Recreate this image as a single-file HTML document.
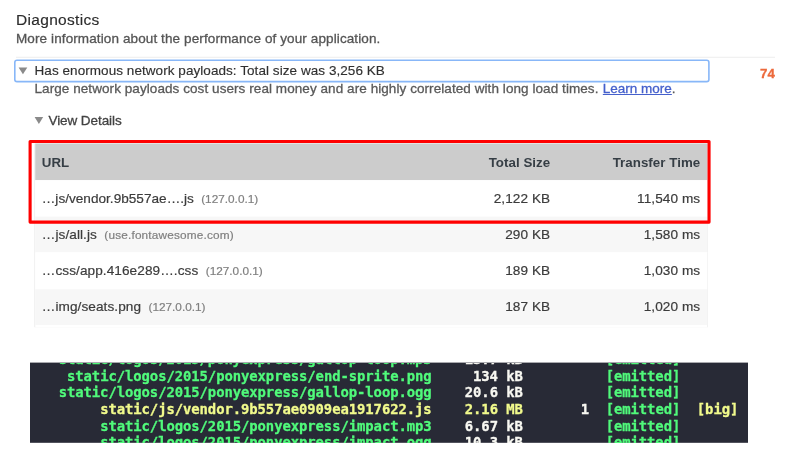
<!DOCTYPE html>
<html lang="en">
<head>
<meta charset="utf-8">
<title>Diagnostics</title>
<style>
  html, body { margin: 0; padding: 0; background: #fff; }
  body { width: 800px; height: 473px; position: relative; overflow: hidden;
         font-family: "Liberation Sans", sans-serif; color: #212121; }
  #wrap { position: absolute; left: 0; top: 0; width: 800px; height: 473px; overflow: hidden; filter: blur(0.3px); }
  #shapes { position: absolute; left: 0; top: 0; width: 800px; height: 473px; }
  .abs { position: absolute; white-space: nowrap; line-height: 1; -webkit-text-stroke: 0.3px currentColor; }
  #title { left: 16px; top: 11.5px; font-size: 15.5px; letter-spacing: 0.32px; color: #2c2c2c; -webkit-text-stroke-width: 0.15px; }
  #sub { left: 16px; top: 32px; font-size: 13.5px; letter-spacing: 0.11px; color: #555; }
  #audit { left: 34.5px; top: 64px; font-size: 13.5px; letter-spacing: 0.06px; color: #303030; -webkit-text-stroke-width: 0.15px; }
  #score { left: 760px; top: 66.5px; font-size: 13.3px; font-weight: bold; color: #ec6a3c; }
  #desc { left: 34.5px; top: 82px; font-size: 13.5px; letter-spacing: 0.07px; color: #595959; }
  #desc a { color: #4560cc; text-decoration: underline; margin-left: 0.5px; letter-spacing: 0; }
  #view { left: 48.5px; top: 114px; font-size: 13.5px; letter-spacing: -0.08px; color: #424242; }
  #table { position: absolute; left: 35.25px; top: 143.75px; width: 672px; height: 181px; }
  .row { position: absolute; left: 0; width: 100%; height: 36px; }
  .row span { -webkit-text-stroke: 0.2px currentColor; position: absolute; top: 1px; line-height: 36px;
              font-size: 13.6px; letter-spacing: 0.08px; color: #3c3c3c; white-space: nowrap; }
  .row .c1 { left: 6.5px; }
  .row .c1 small { font-size: 11.8px; letter-spacing: 0; color: #808080; margin-left: 3.5px; }
  .row .c1 small.fa { letter-spacing: 0.18px; }
  .row .c2 { right: 157px; text-align: right; }
  .row .c3 { right: 7px; text-align: right; }
  .head span { font-weight: bold; color: #363e45; font-size: 13.3px; top: 1.7px; -webkit-text-stroke-width: 0; letter-spacing: 0.05px; }
  #term { position: absolute; left: 30px; top: 363px; width: 718px; height: 80px; overflow: hidden; }
  #term pre { position: absolute; margin: 0; left: 28.7px; top: -12.1px; letter-spacing: -0.076px; -webkit-text-stroke: 0.3px currentColor;
              font-family: "DejaVu Sans Mono", "Liberation Mono", monospace; font-weight: bold;
              font-size: 13.9px; line-height: 16.65px; color: #50fa7b; white-space: pre; }
  #term .y { color: #f1fa8c; }
  #term .w { color: #f8f8f2; }
</style>
</head>
<body>
<div id="wrap">
<svg id="shapes" width="800" height="473" viewBox="0 0 800 473">
  <!-- section rule -->
  <rect x="16" y="56.7" width="759" height="1.2" fill="#f0f0f0"/>
  <!-- focus ring around the audit title -->
  <rect x="14.8" y="60.3" width="694.1" height="21.3" rx="2.2" ry="2.2" fill="none" stroke="#88b7f8" stroke-width="1.6"/>
  <!-- disclosure triangles -->
  <path d="M18.6 67.4 L27.3 67.4 L22.95 74.2 Z" fill="#8a8a8a"/>
  <path d="M34.6 117 L43.2 117 L38.9 124 Z" fill="#8a8a8a"/>
  <!-- table -->
  <rect x="34.25" y="143.75" width="673.7" height="183.5" fill="#eeeeee"/>
  <rect x="35.25" y="143.75" width="672" height="183.5" fill="#ffffff"/>
  <rect x="35.25" y="143.5" width="672" height="36.7" fill="#cccccc"/>
  <rect x="35.25" y="180.2" width="672" height="36.4" fill="#ffffff"/>
  <rect x="35.25" y="216.6" width="672" height="35.8" fill="#f7f7f7"/>
  <rect x="35.25" y="252.4" width="672" height="36.9" fill="#ffffff"/>
  <rect x="35.25" y="289.3" width="672" height="35.6" fill="#f7f7f7"/>
  <!-- red highlight box -->
  <rect x="30.1" y="141.45" width="678.95" height="80.65" fill="none" stroke="#ff0000" stroke-width="3.1" stroke-linejoin="round"/>
  <!-- terminal background -->
  <rect x="30" y="362.6" width="718" height="80.2" fill="#282a36"/>
</svg>
<div class="abs" id="title">Diagnostics</div>
<div class="abs" id="sub">More information about the performance of your application.</div>
<div class="abs" id="audit">Has enormous network payloads: Total size was 3,256 KB</div>
<div class="abs" id="score">74</div>
<div class="abs" id="desc">Large network payloads cost users real money and are highly correlated with long load times. <a>Learn more</a>.</div>
<div class="abs" id="view">View Details</div>
<div id="table">
  <div class="row head" style="top:0"><span class="c1">URL</span><span class="c2">Total Size</span><span class="c3">Transfer Time</span></div>
  <div class="row" style="top:36px"><span class="c1" style="letter-spacing:0.01px">…js/vendor.9b557ae….js <small>(127.0.0.1)</small></span><span class="c2">2,122 KB</span><span class="c3">11,540 ms</span></div>
  <div class="row" style="top:72.3px"><span class="c1">…js/all.js <small class="fa">(use.fontawesome.com)</small></span><span class="c2">290 KB</span><span class="c3">1,580 ms</span></div>
  <div class="row" style="top:108.6px"><span class="c1">…css/app.416e289….css <small>(127.0.0.1)</small></span><span class="c2">189 KB</span><span class="c3">1,030 ms</span></div>
  <div class="row" style="top:144.2px"><span class="c1">…img/seats.png <small>(127.0.0.1)</small></span><span class="c2">187 KB</span><span class="c3">1,020 ms</span></div>
</div>
<div id="term"><pre><span>static/logos/2015/ponyexpress/gallop-loop.mp3</span>    <span class="w">13.7 kB</span>          [emitted]
 <span>static/logos/2015/ponyexpress/end-sprite.png</span>     <span class="w">134 kB</span>          [emitted]
<span>static/logos/2015/ponyexpress/gallop-loop.ogg</span>    <span class="w">20.6 kB</span>          [emitted]
     <span class="y">static/js/vendor.9b557ae0909ea1917622.js</span>    <span class="y">2.16 MB</span>       <span class="w">1</span>  [emitted]  <span class="y">[big]</span>
     <span>static/logos/2015/ponyexpress/impact.mp3</span>    <span class="w">6.67 kB</span>          [emitted]
     <span>static/logos/2015/ponyexpress/impact.ogg</span>    <span class="w">10.3 kB</span>          [emitted]</pre></div>
</div>
</body>
</html>
